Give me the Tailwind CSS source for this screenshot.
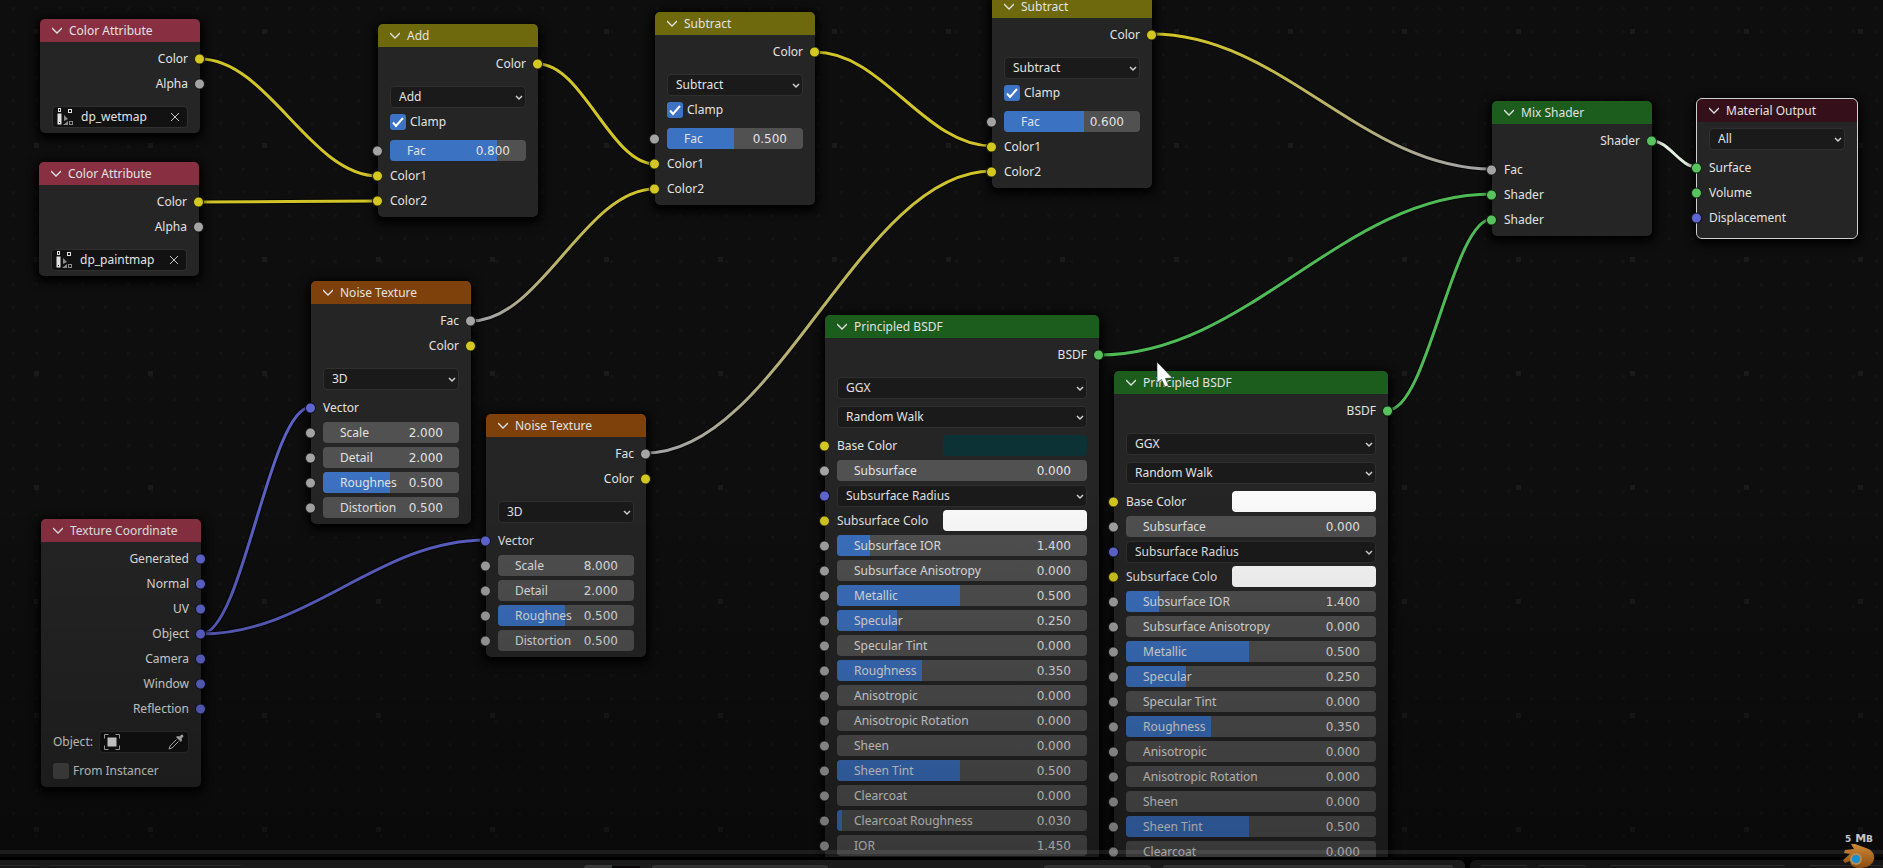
<!DOCTYPE html>
<html lang="en">
<head>
    <meta charset="UTF-8">
    <meta name="viewport" content="width=device-width, initial-scale=1.0">
    <title>Shader Editor</title>
    <script src="https://cdn.jsdelivr.net/npm/@tailwindcss/browser@4"></script>
</head>
<body class="bg-black h-screen overflow-hidden flex flex-col font-['Noto_Sans','DejaVu_Sans',sans-serif] text-xs text-[#e2e2e2]">

    <!-- Node canvas -->
    <main class="relative flex-1 min-h-0 overflow-hidden bg-[#0e0e0e]">
        <svg class="absolute inset-0 w-full h-full" aria-hidden="true">
            <defs>
                <pattern id="minorDots" x="25" y="20" width="23" height="23" patternUnits="userSpaceOnUse">
                    <rect x="10" y="10" width="3" height="3" fill="#131313" />
                </pattern>
                <pattern id="majorDots" x="-20" y="-25" width="114" height="114" patternUnits="userSpaceOnUse">
                    <rect x="54" y="54" width="5" height="5" fill="#1a1a1a" />
                </pattern>
            </defs>
            <rect width="100%" height="100%" fill="url(#minorDots)" />
            <rect width="100%" height="100%" fill="url(#majorDots)" />
        </svg>
        <svg id="links" class="absolute inset-0 w-full h-full" fill="none" aria-hidden="true"></svg>
        <div id="nodes"></div>

        <!-- Shade towards the bottom edge -->
        <div class="absolute inset-x-0 bottom-0 h-[45%] bg-linear-to-b from-transparent to-black/30 pointer-events-none"></div>
        <div class="absolute inset-x-0 bottom-[3px] h-1 bg-white/8"></div>

        <!-- Mouse pointer -->
        <svg class="absolute left-[1156px] top-[361px] pointer-events-none" width="18" height="28" viewBox="0 0 18 28">
            <path d="M1 1 L1 22 L5.500 18.500 L9 26 L12.500 24.500 L9.500 17.500 L16.500 17 Z" fill="#fff" stroke="#222" stroke-width=".6" />
        </svg>
    </main>

    <!-- Top edge of the editor below -->
    <footer class="mt-[3px] h-2 flex gap-[5px] overflow-hidden">
        <div class="relative w-[1465px] shrink-0 bg-[#1b1b1b] rounded-tr-md flex items-end overflow-hidden">
            <div class="w-10 h-[3px] rounded-tr border-t border-[#2a2a2a] bg-[#161616]"></div>
            <div class="ml-2 w-[194px] h-[3px] rounded-t border-t border-[#2a2a2a] bg-[#161616]"></div>
            <div class="ml-[342px] w-7 h-[3px] rounded-tl bg-[#393939]"></div>
            <div class="w-7 h-[2px] bg-[#0d0808]"></div>
            <div class="ml-3 w-[176px] h-[3px] rounded-t bg-[#323232]"></div>
            <div class="ml-[216px] w-[107px] h-[3px] rounded-t bg-[#323232]"></div>
            <div class="ml-3 w-[290px] h-[3px] rounded-t bg-[#323232]"></div>
        </div>
        <div class="flex-1 bg-[#161616] rounded-tl-md flex items-end overflow-hidden">
            <div class="ml-[10px] w-12 h-[3px] rounded-t border-t border-[#2c2c2c]"></div>
            <div class="ml-[10px] w-12 h-[3px] rounded-t border-t border-[#2c2c2c]"></div>
            <div class="ml-6 w-[175px] h-[3px] rounded-t border-t border-[#2c2c2c]"></div>
            <div class="ml-6 flex-1 h-[3px] rounded-t border-t border-[#2c2c2c]"></div>
        </div>
    </footer>

    <!-- Watermark -->
    <div class="absolute right-2 bottom-0 w-8 flex flex-col items-center">
        <div class="font-['DejaVu_Sans',sans-serif] font-bold text-[11px] leading-[10px] whitespace-nowrap text-[#c4c4c4]"><span class="text-[9px]">5</span> M<span class="text-[9px]">B</span></div>
        <svg width="32" height="24" viewBox="0 0 32 24" aria-hidden="true">
            <defs>
                <linearGradient id="logoFill" x1="0" y1="0" x2="0" y2="1">
                    <stop offset="0" stop-color="#cf8a35" />
                    <stop offset="1" stop-color="#8a4a12" />
                </linearGradient>
            </defs>
            <path d="M8 0 L12 0 L23 4 C29 6 32 10 31 15 C30 20 26 23 19 24 C11 25 7 21 7 17 L2 19 L0 16 L7 10 L1 9 L2 6 L11 5 Z" fill="url(#logoFill)" />
            <circle cx="13" cy="15" r="6" fill="#b98a52" />
            <circle cx="13" cy="15" r="4" fill="#1590d0" />
        </svg>
    </div>

    <script>
        const HEADER = {
            red: 'bg-[#883042]',
            olive: 'bg-[#6e690c]',
            orange: 'bg-[#7e410b]',
            green: 'bg-[#1c5c1d]',
            maroon: 'bg-[#35101a]',
        };
        const SOCKET = {
            yellow: 'bg-[#d3c822]',
            grey: 'bg-[#a4a4a4]',
            blue: 'bg-[#6066cf]',
            green: 'bg-[#58c25f]',
        };
        const LINK = { yellow: '#d0c428', grey: '#a4a4a4', blue: '#5c61c4', green: '#4fbb57', white: '#e0efe0' };

        const attributeIcon = `
            <svg width="16" height="17" viewBox="0 0 16 17" class="shrink-0" fill="none" stroke="#e0e0e0" aria-hidden="true">
                <rect x="1.500" y=".5" width="2" height="3" /><rect x="11.500" y="1.500" width="3" height="3" />
                <rect x="12.500" y="13.500" width="3" height="3" stroke="#8a8a8a" />
                <path d="M2.500 5.500v11" stroke-width="4" /><path d="M2.500 14v1" stroke="#222" />
                <path d="M7 7l4 4-4 2zM6 17l5-4v4z" fill="#8a8a8a" stroke="none" />
            </svg>`;
        const objectIcon = `
            <svg width="16" height="16" viewBox="0 0 16 16" class="shrink-0" fill="none" stroke="#b8b8b8" aria-hidden="true">
                <path d="M.5 4.500v-4h4M11.500.5h4v4M15.500 11.500v4h-4M4.500 15.500h-4v-4" />
                <rect x="3.500" y="3.500" width="9" height="9" fill="#f0f0f0" stroke="none" />
            </svg>`;
        const dropperIcon = `
            <svg width="16" height="16" viewBox="0 0 16 16" fill="none" stroke="#c4c4c4" aria-hidden="true">
                <path d="M8.500 5.500L2 12l-1 3 3-1 6.500-6.500" />
                <path d="M8 3l5 5 1-2-.5-1.500L15.500 2.500Q15.500.5 13.500.5L11.500 2.500 9.500 2z" fill="#c4c4c4" stroke="none" />
            </svg>`;

        const dot = (color, side) => color ? `
            <span class="absolute top-1/2 -translate-y-1/2 ${side} size-[11px] rounded-full border border-black/80 ${SOCKET[color]}"></span>` : '';
        const left = (color) => dot(color, '-left-[6px]');
        const right = (color) => dot(color, '-right-[5px]');

        // Row builders. Every row is 25px high, gaps between groups are separate.
        const out = (name, color) => `
            <div class="relative h-[25px] px-3 flex items-center justify-end">${name}${right(color)}</div>`;
        const inp = (name, color) => `
            <div class="relative h-[25px] px-3 flex items-center">${name}${left(color)}</div>`;
        const gap = () => `<div class="h-2"></div>`;
        const thin = () => `<div class="h-1"></div>`;

        const select = (value, color) => `
            <div class="relative h-[25px] px-3 flex items-center">
                <select aria-label="${value}" class="appearance-none w-full h-[22px] pl-2 rounded bg-[#1a1a1a] border border-[#2f2f2f]"><option>${value}</option></select>
                <svg class="absolute right-[15px] top-[11px] pointer-events-none" width="8" height="6" viewBox="0 0 8 6" fill="none" stroke="#d0d0d0" stroke-width="1.500"><path d="M1 1l3 3 3-3" /></svg>
                ${left(color)}
            </div>`;
        const check = (name, checked) => `
            <label class="relative h-[25px] px-3 flex items-center gap-1">
                <input type="checkbox" ${checked ? 'checked' : ''} class="appearance-none size-4 rounded-[3px] bg-[#484848] checked:bg-[#3d73c4]">
                ${checked ? '<svg class="absolute left-3 pointer-events-none" width="16" height="16" viewBox="0 0 16 16" fill="none" stroke="#fff" stroke-width="2"><path d="M3 8.500l3 3.500 7-8" /></svg>' : ''}
                ${name}
            </label>`;
        // Factor field: blue part shows how far the value is along its range
        const slider = (name, value, fill) => `
            <div class="relative h-[25px] px-3 flex items-center">
                <label class="relative flex-1 h-[21px] pl-[17px] pr-4 flex items-center justify-between rounded bg-[#515151] overflow-hidden">
                    <span class="absolute inset-y-0 left-0 bg-[#3c72c2]" style="width: ${fill}%"></span>
                    <span class="relative whitespace-nowrap">${name}</span>
                    <output class="relative font-['DejaVu_Sans',sans-serif]">${value}</output>
                    <input type="range" min="0" max="100" value="${fill}" class="absolute inset-0 w-full opacity-0">
                </label>
                ${left('grey')}
            </div>`;
        const number = (name, value) => `
            <div class="relative h-[25px] px-3 flex items-center">
                <label class="flex-1 h-[21px] pl-[17px] pr-4 flex items-center justify-between rounded bg-[#515151]">
                    <span class="whitespace-nowrap">${name}</span>
                    <input type="text" inputmode="decimal" value="${value}" class="w-10 text-right font-['DejaVu_Sans',sans-serif]">
                </label>
                ${left('grey')}
            </div>`;
        const swatch = (name, value) => `
            <label class="relative h-[25px] px-3 flex items-center justify-between">
                <span>${name}</span>
                <input type="color" value="${value}" class="appearance-none w-36 h-[21px] p-0 rounded overflow-hidden [&::-webkit-color-swatch-wrapper]:p-0 [&::-webkit-color-swatch]:border-0">
                ${left('yellow')}
            </label>`;
        const attribute = (value) => `
            <div class="h-[25px] px-3 flex items-center">
                <div class="flex-1 min-w-0 h-[22px] pl-1 pr-[7px] flex items-center gap-2 rounded bg-[#121212] border border-[#2f2f2f]">
                    ${attributeIcon}
                    <input type="text" aria-label="Attribute" value="${value}" class="flex-1 min-w-0">
                    <button type="button" aria-label="Clear"><svg width="10" height="10" viewBox="0 0 10 10" fill="none" stroke="#c8c8c8"><path d="M1 1l8 8M9 1l-8 8" /></svg></button>
                </div>
            </div>`;
        const object = () => `
            <label class="h-[25px] px-3 flex items-center gap-[6px]">
                Object:
                <span class="flex-1 min-w-0 h-[22px] px-1 flex items-center rounded bg-[#121212] border border-[#2f2f2f]">
                    ${objectIcon}
                    <input type="text" class="flex-1 min-w-0">
                    <button type="button" aria-label="Pick object">${dropperIcon}</button>
                </span>
            </label>`;

        const mixRows = (mode, fac, fill) => [
            out('Color', 'yellow'), gap(), select(mode), check('Clamp', true), thin(),
            slider('Fac', fac, fill), inp('Color1', 'yellow'), inp('Color2', 'yellow'),
        ];
        const noiseRows = (scale) => [
            out('Fac', 'grey'), out('Color', 'yellow'), gap(), select('3D'), thin(), inp('Vector', 'blue'),
            number('Scale', scale), number('Detail', '2.000'), slider('Roughnes', '0.500', 49), number('Distortion', '0.500'),
        ];
        const bsdfRows = (base, subsurface) => [
            out('BSDF', 'green'), gap(), select('GGX'), thin(), select('Random Walk'), thin(),
            swatch('Base Color', base), slider('Subsurface', '0.000', 0), select('Subsurface Radius', 'blue'),
            swatch('Subsurface Colo', subsurface), slider('Subsurface IOR', '1.400', 13),
            slider('Subsurface Anisotropy', '0.000', 0), slider('Metallic', '0.500', 49), slider('Specular', '0.250', 24),
            slider('Specular Tint', '0.000', 0), slider('Roughness', '0.350', 34), slider('Anisotropic', '0.000', 0),
            slider('Anisotropic Rotation', '0.000', 0), slider('Sheen', '0.000', 0), slider('Sheen Tint', '0.500', 49),
            slider('Clearcoat', '0.000', 0), slider('Clearcoat Roughness', '0.030', 2), number('IOR', '1.450'),
        ];
        const attributeRows = (value) => [out('Color', 'yellow'), out('Alpha', 'grey'), gap(), attribute(value)];

        const nodes = [
            { title: 'Color Attribute', x: 40, y: 19, w: 160, color: 'red', rows: attributeRows('dp_wetmap') },
            { title: 'Color Attribute', x: 39, y: 162, w: 160, color: 'red', rows: attributeRows('dp_paintmap') },
            { title: 'Add', x: 378, y: 24, w: 160, color: 'olive', rows: mixRows('Add', '0.800', 79) },
            { title: 'Subtract', x: 655, y: 12, w: 160, color: 'olive', rows: mixRows('Subtract', '0.500', 49) },
            { title: 'Subtract', x: 992, y: -5, w: 160, color: 'olive', rows: mixRows('Subtract', '0.600', 59) },
            { title: 'Noise Texture', x: 311, y: 281, w: 160, color: 'orange', rows: noiseRows('2.000') },
            { title: 'Noise Texture', x: 486, y: 414, w: 160, color: 'orange', rows: noiseRows('8.000') },
            { title: 'Texture Coordinate', x: 41, y: 519, w: 160, color: 'red', rows: [
                ...['Generated', 'Normal', 'UV', 'Object', 'Camera', 'Window', 'Reflection'].map((n) => out(n, 'blue')),
                gap(), object(), thin(), check('From Instancer', false),
            ] },
            { title: 'Principled BSDF', x: 825, y: 315, w: 274, color: 'green', rows: bsdfRows('#0c3235', '#ffffff') },
            { title: 'Principled BSDF', x: 1114, y: 371, w: 274, color: 'green', rows: bsdfRows('#ffffff', '#ffffff') },
            { title: 'Mix Shader', x: 1492, y: 101, w: 160, color: 'green', rows: [
                out('Shader', 'green'), thin(), inp('Fac', 'grey'), inp('Shader', 'green'), inp('Shader', 'green'),
            ] },
            { title: 'Material Output', x: 1697, y: 99, w: 160, color: 'maroon', active: true, rows: [
                select('All'), thin(), inp('Surface', 'green'), inp('Volume', 'green'), inp('Displacement', 'blue'), thin(),
            ] },
        ];

        document.getElementById('nodes').innerHTML = nodes.map((n) => `
            <section class="absolute rounded-[5px] bg-[#252525] pb-1 shadow-[0_3px_10px_3px_#000] ${n.active ? 'outline outline-[#d0d0d0]' : ''}" style="left: ${n.x}px; top: ${n.y}px; width: ${n.w}px">
                <header class="h-[23px] mb-1 px-3 flex items-center gap-[7px] rounded-t-[5px] ${HEADER[n.color]}">
                    <button type="button" aria-label="Collapse"><svg width="10" height="7" viewBox="0 0 10 7" fill="none" stroke="#e0e0e0" stroke-width="1.300"><path d="M0 1l5 5 5-5" /></svg></button>
                    <h2>${n.title}</h2>
                </header>
                ${n.rows.join('')}
            </section>`).join('');

        // [x1, y1, x2, y2, start colour, end colour]
        const links = [
            [200, 59, 378, 176, 'yellow', 'yellow'],
            [199, 202, 378, 201, 'yellow', 'yellow'],
            [538, 64, 655, 164, 'yellow', 'yellow'],
            [815, 52, 992, 146, 'yellow', 'yellow'],
            [471, 321, 655, 189, 'grey', 'yellow'],
            [646, 453, 992, 171, 'grey', 'yellow'],
            [1152, 34, 1492, 169, 'yellow', 'grey'],
            [201, 634, 311, 407, 'blue', 'blue'],
            [201, 634, 486, 540, 'blue', 'blue'],
            [1099, 355, 1492, 194, 'green', 'green'],
            [1388, 410, 1492, 219, 'green', 'green'],
            [1652, 141, 1697, 167, 'white', 'white'],
        ];
        document.getElementById('links').innerHTML = links.map(([x1, y1, x2, y2, from, to], i) => {
            const handle = (x2 - x1) * 0.38;
            const d = `M${x1} ${y1}C${x1 + handle} ${y1} ${x2 - handle} ${y2} ${x2} ${y2}`;
            return `
                <linearGradient id="link${i}" gradientUnits="userSpaceOnUse" x1="${x1}" y1="0" x2="${x2}" y2="0">
                    <stop offset="0.1" stop-color="${LINK[from]}" /><stop offset="0.9" stop-color="${LINK[to]}" />
                </linearGradient>
                <path d="${d}" stroke="#000" stroke-opacity=".6" stroke-width="5" />
                <path d="${d}" stroke="url(#link${i})" stroke-width="3" />`;
        }).join('');
    </script>
</body>
</html>
